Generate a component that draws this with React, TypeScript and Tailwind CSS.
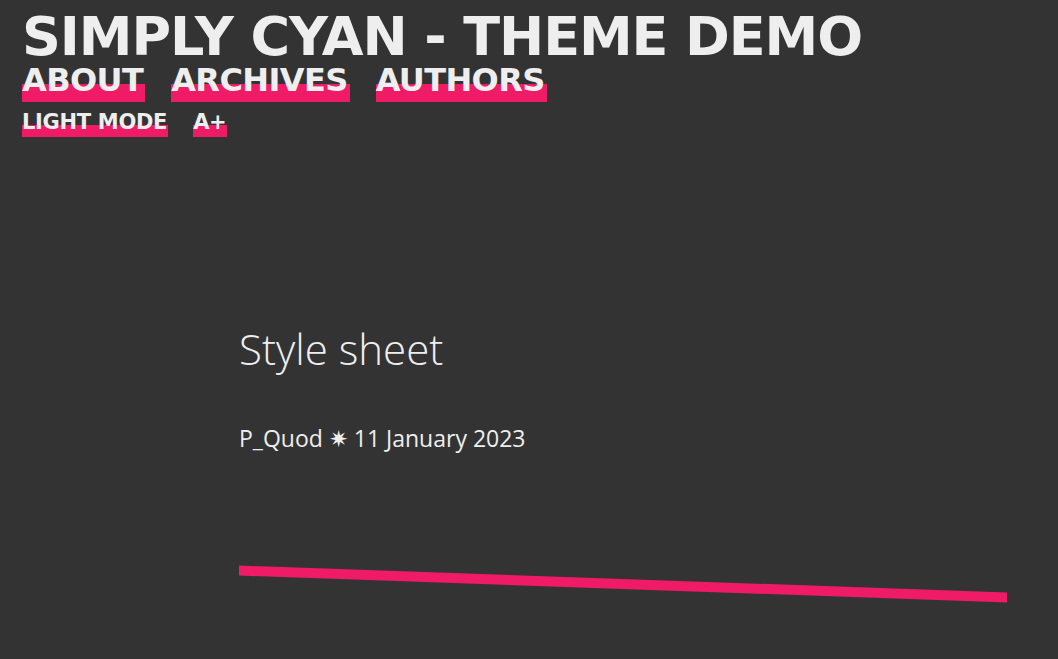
import React from "react";

const hl = "bg-[linear-gradient(transparent_55%,#ef1b66_55%)]";

export default function App() {
  return (
    <div className="min-h-[659px] w-full bg-[#333333] text-[#eeeeee] overflow-hidden">
      <header className="pl-[22px] pt-[8px]">
        <h1 className="font-['DejaVu_Sans',sans-serif] font-bold text-[54px] leading-[58px] tracking-[-1.1px] text-[#eeeeee]">
          SIMPLY CYAN - THEME DEMO
        </h1>
        <nav className="flex gap-[26px] font-['DejaVu_Sans',sans-serif] font-bold text-[32px] leading-[36px] tracking-[-0.6px] mt-[-4px]">
          <a className={`${hl} pr-[2px] pb-[4px]`}>ABOUT</a>
          <a className={`${hl} pr-[2px] pb-[4px]`}>ARCHIVES</a>
          <a className={`${hl} pr-[2px] pb-[4px]`}>AUTHORS</a>
        </nav>
        <div className="flex gap-[25px] font-['DejaVu_Sans',sans-serif] font-bold text-[21px] leading-[24px] tracking-[-0.3px] mt-[8px]">
          <a className={`${hl} pr-[1px] pb-[3px]`}>LIGHT MODE</a>
          <a className={`${hl} pr-[1px] pb-[3px]`}>A+</a>
        </div>
      </header>
      <main className="pl-[239px] pt-[188px]">
        <h2 className="font-['Open_Sans',sans-serif] font-light text-[42px] leading-[48px]">Style sheet</h2>
        <p className="mt-[51px] font-['Open_Sans',sans-serif] text-[23px] leading-[28px]">P_Quod ✷ 11 January 2023</p>
        <div className="mt-[127px] h-[10px] w-[768px] bg-[#ef1b66] skew-y-2"></div>
      </main>
    </div>
  );
}
